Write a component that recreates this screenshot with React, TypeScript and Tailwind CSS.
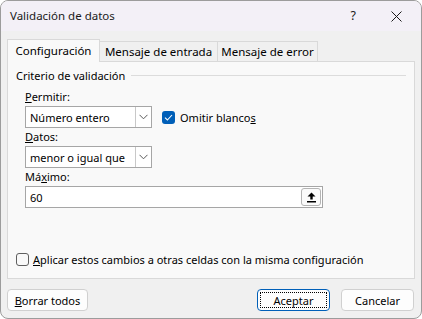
import React from "react";

const font = { fontFamily: '"Noto Sans", "Open Sans", sans-serif' };

function Chevron() {
  return (
    <svg width="9" height="6" viewBox="0 0 9 6" fill="none">
      <path d="M0.5 0.8 L4.5 4.8 L8.5 0.8" stroke="#5a5a5a" strokeWidth="1" />
    </svg>
  );
}

function Select({ value, width }: { value: string; width: number }) {
  return (
    <div
      className="flex h-[22px] border border-[#a6a6a6] bg-white items-stretch"
      style={{ width }}
    >
      <div className="flex-1 flex items-center pl-[4px] text-[11px] text-black leading-none">{value}</div>
      <div className="w-[16px] border-l border-[#c8c8c8] flex items-center justify-center">
        <Chevron />
      </div>
    </div>
  );
}

export default function App() {
  return (
    <div className="w-[422px] h-[319px] bg-white text-[11px] text-black" style={font}>
      <div className="w-full h-full rounded-[8px] border border-[#9c9c9c] overflow-hidden flex flex-col bg-[#f0f0f0]">
        {/* title bar */}
        <div className="h-[30px] bg-[#f3f0f7] flex items-center shrink-0">
          <div className="pl-[9px] flex-1 text-[11.5px] leading-none text-[#1a1a1a]">Validación de datos</div>
          <div className="text-[12.5px] leading-none text-[#1a1a1a]">?</div>
          <div className="ml-[35px] mr-[19px] flex">
            <svg width="11" height="11" viewBox="0 0 11 11">
              <path d="M0.5 0.5 L10.5 10.5 M10.5 0.5 L0.5 10.5" stroke="#1a1a1a" strokeWidth="1" />
            </svg>
          </div>
        </div>

        {/* body */}
        <div className="px-[6px] pt-[7px] flex flex-col">
          {/* tabs */}
          <div className="flex items-end h-[23px] relative z-10">
            <div className="h-[23px] w-[93px] bg-[#f9f9f9] border border-b-0 border-[#d9d9d9] flex items-center justify-center leading-none -mb-px pb-[1px] text-[11.5px]">
              Configuración
            </div>
            <div className="h-[20px] w-[118px] bg-[#f0f0f0] border border-l-0 border-b-0 border-[#d9d9d9] flex items-center justify-center leading-none text-[11.5px]">
              Mensaje de entrada
            </div>
            <div className="h-[20px] w-[100px] bg-[#f0f0f0] border border-l-0 border-b-0 border-[#d9d9d9] flex items-center justify-center leading-none text-[11.5px]">
              Mensaje de error
            </div>
          </div>
          {/* panel */}
          <div className="h-[218px] bg-[#f9f9f9] border border-[#d9d9d9] flex flex-col px-[8px]">
            <div className="flex items-center mt-[6px] h-[14px]">
              <span className="leading-none">Criterio de validación</span>
              <div className="flex-1 h-px bg-[#dcdcdc] ml-[6px]" />
            </div>
            <div className="pl-[9px] flex flex-col">
              <div className="mt-[8px] leading-none h-[13px] flex items-center"><span><u>P</u>ermitir:</span></div>
              <div className="flex items-center mt-[3px]">
                <Select value="Número entero" width={127} />
                <div className="ml-[10px] w-[13px] h-[13px] rounded-[3px] bg-[#005fb8] flex items-center justify-center">
                  <svg width="9" height="7" viewBox="0 0 9 7" fill="none">
                    <path d="M1 3.6 L3.4 6 L8 1" stroke="white" strokeWidth="1.1" />
                  </svg>
                </div>
                <span className="ml-[5px] leading-none">Omitir blanco<u>s</u></span>
              </div>
              <div className="mt-[2px] leading-none h-[13px] flex items-center"><span><u>D</u>atos:</span></div>
              <div className="mt-[3px]">
                <Select value="menor o igual que" width={127} />
              </div>
              <div className="mt-[2px] leading-none h-[13px] flex items-center"><span>Má<u>x</u>imo:</span></div>
              <div className="mt-[3px] w-[298px] h-[22px] border border-[#a6a6a6] bg-white flex items-center">
                <span className="flex-1 pl-[4px] leading-none">60</span>
                <div className="w-[20px] h-[18px] mr-[1px] border border-[#b4b4b4] rounded-[3px] bg-[#fbfbfb] flex items-center justify-center">
                  <svg width="9" height="11" viewBox="0 0 9 11">
                    <path d="M4.5 0.5 L8.5 4.5 L5.7 4.5 L5.7 7.5 L3.3 7.5 L3.3 4.5 L0.5 4.5 Z" fill="#000" />
                    <rect x="0" y="9" width="9" height="1.5" fill="#000" />
                  </svg>
                </div>
              </div>
            </div>
            <div className="flex-1" />
            <div className="flex items-center mb-[12px]">
              <div className="w-[13px] h-[13px] rounded-[3px] border border-[#5f5f5f] bg-[#f9f9f9]" />
              <span className="ml-[4px] leading-none"><u>A</u>plicar estos cambios a otras celdas con la misma configuración</span>
            </div>
          </div>
        </div>

        {/* footer */}
        <div className="flex items-center px-[6px] mt-[10px]">
          <div className="w-[81px] h-[22px] rounded-[4px] border border-[#d0d0d0] bg-[#fdfdfd] flex items-center justify-center leading-none">
            <span><u>B</u>orrar todos</span>
          </div>
          <div className="flex-1" />
          <div className="w-[73px] h-[22px] rounded-[4px] border border-[#005fb8] bg-[#fdfdfd] flex items-center justify-center p-[2px]">
            <div className="w-full h-full border border-dotted border-black flex items-center justify-center leading-none">Aceptar</div>
          </div>
          <div className="w-[73px] h-[22px] ml-[11px] mr-[1px] rounded-[4px] border border-[#d0d0d0] bg-[#fdfdfd] flex items-center justify-center leading-none">
            Cancelar
          </div>
        </div>
      </div>
    </div>
  );
}
